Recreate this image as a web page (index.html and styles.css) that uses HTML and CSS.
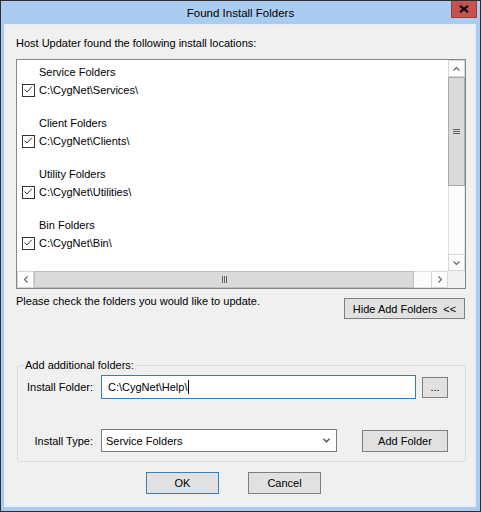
FILE: index.html
```html
<!DOCTYPE html>
<html lang="en">
<head>
<meta charset="utf-8">
<title>Found Install Folders</title>
<link rel="stylesheet" href="styles.css">
</head>
<body>
<div class="window">
  <div class="titlebar">
    <span class="tb-spacer"></span>
    <span class="title">Found Install Folders</span>
    <button class="close" aria-label="Close">
      <svg width="10" height="8" viewBox="0 0 10 8"><path d="M1 0.8 L9 7.2 M9 0.8 L1 7.2" stroke="#111" stroke-width="2.2" fill="none"/></svg>
    </button>
  </div>
  <div class="client">
    <p class="intro">Host Updater found the following install locations:</p>
    <div class="listbox">
      <div class="list-content">
        <div class="group">
          <div class="group-label">Service Folders</div>
          <div class="item"><span class="check"><svg width="11" height="11" viewBox="0 0 11 11"><path d="M1.5 4.5 L4 7 L9 1.5" stroke="#3a3a3a" stroke-width="1" fill="none"/></svg></span><span>C:\CygNet\Services\</span></div>
        </div>
        <div class="group">
          <div class="group-label">Client Folders</div>
          <div class="item"><span class="check"><svg width="11" height="11" viewBox="0 0 11 11"><path d="M1.5 4.5 L4 7 L9 1.5" stroke="#3a3a3a" stroke-width="1" fill="none"/></svg></span><span>C:\CygNet\Clients\</span></div>
        </div>
        <div class="group">
          <div class="group-label">Utility Folders</div>
          <div class="item"><span class="check"><svg width="11" height="11" viewBox="0 0 11 11"><path d="M1.5 4.5 L4 7 L9 1.5" stroke="#3a3a3a" stroke-width="1" fill="none"/></svg></span><span>C:\CygNet\Utilities\</span></div>
        </div>
        <div class="group">
          <div class="group-label">Bin Folders</div>
          <div class="item"><span class="check"><svg width="11" height="11" viewBox="0 0 11 11"><path d="M1.5 4.5 L4 7 L9 1.5" stroke="#3a3a3a" stroke-width="1" fill="none"/></svg></span><span>C:\CygNet\Bin\</span></div>
        </div>
      </div>
      <div class="vscroll">
        <div class="sb-btn"><svg width="7" height="4" viewBox="0 0 7 4"><path d="M0.5 3.5 L3.5 0.5 L6.5 3.5" stroke="#606060" stroke-width="1.1" fill="none"/></svg></div>
        <div class="vthumb"><span class="grip-h"></span></div>
        <div class="vtrack"></div>
        <div class="sb-btn"><svg width="7" height="4" viewBox="0 0 7 4"><path d="M0.5 0.5 L3.5 3.5 L6.5 0.5" stroke="#606060" stroke-width="1.1" fill="none"/></svg></div>
      </div>
      <div class="hscroll">
        <div class="sb-btn"><svg width="4" height="7" viewBox="0 0 4 7"><path d="M3.5 0.5 L0.5 3.5 L3.5 6.5" stroke="#606060" stroke-width="1.1" fill="none"/></svg></div>
        <div class="hthumb"><span class="grip-v"></span></div>
        <div class="htrack"></div>
        <div class="sb-btn"><svg width="4" height="7" viewBox="0 0 4 7"><path d="M0.5 0.5 L3.5 3.5 L0.5 6.5" stroke="#606060" stroke-width="1.1" fill="none"/></svg></div>
      </div>
      <div class="corner"></div>
    </div>
    <div class="note-row">
      <span class="note">Please check the folders you would like to update.</span>
      <button class="btn btn-hide">Hide Add Folders&nbsp;&nbsp;&lt;&lt;</button>
    </div>
    <fieldset class="addbox">
      <legend>Add additional folders:</legend>
      <div class="field-row">
        <span class="field-label">Install Folder:</span>
        <div class="textbox">C:\CygNet\Help\<span class="caret"></span></div>
        <button class="btn btn-browse">...</button>
      </div>
      <div class="field-row row-type">
        <span class="field-label">Install Type:</span>
        <div class="combo"><span>Service Folders</span><svg width="7" height="5" viewBox="0 0 7 5"><path d="M0.5 0.8 L3.5 3.8 L6.5 0.8" stroke="#505050" stroke-width="1.4" fill="none"/></svg></div>
        <button class="btn btn-add">Add Folder</button>
      </div>
    </fieldset>
    <div class="actions">
      <button class="btn btn-ok">OK</button>
      <button class="btn btn-cancel">Cancel</button>
    </div>
  </div>
</div>
</body>
</html>
```

FILE: styles.css
```css
* { box-sizing: border-box; }

html, body {
  margin: 0;
  padding: 0;
}

body {
  font-family: "Liberation Sans", Arial, sans-serif;
  font-size: 11px;
  color: #000;
  background: #fff;
}

.window {
  width: 481px;
  height: 512px;
  border: 1px solid #2f2f2f;
  background: #a9ccf0;
  display: flex;
  flex-direction: column;
}

.titlebar {
  height: 23px;
  flex: none;
  display: grid;
  grid-template-columns: 1fr auto 1fr;
  align-items: start;
}

.title {
  align-self: center;
  font-size: 11.5px;
  color: #000;
  line-height: 14px;
  padding-top: 1px;
}

.close {
  justify-self: end;
  margin: 0 3px 0 0;
  width: 26px;
  height: 17px;
  padding: 0;
  border: 1px solid #9c3c38;
  border-top: none;
  background: #c75050;
  display: flex;
  align-items: center;
  justify-content: center;
}

.client {
  flex: none;
  width: 472px;
  height: 483px;
  margin: 0 4px 4px 3px;
  border: 1px solid #e4eef9;
  background: #f0f0f0;
  padding-left: 11px;
  display: flex;
  flex-direction: column;
  align-items: flex-start;
}

.intro {
  margin: 11px 0 0;
  line-height: 15px;
}

.listbox {
  margin-top: 8px;
  width: 450px;
  height: 230px;
  border: 1px solid #828790;
  background: #fff;
  display: grid;
  grid-template-columns: 1fr 17px;
  grid-template-rows: 1fr 17px;
}

.list-content {
  padding-top: 3px;
  overflow: hidden;
}

.group + .group { margin-top: 15px; }

.group-label {
  line-height: 18px;
  padding-left: 22px;
}

.item {
  height: 18px;
  display: flex;
  align-items: center;
  gap: 4px;
  padding-left: 5px;
}

.check {
  width: 13px;
  height: 13px;
  border: 1px solid #333;
  background: #fff;
  display: flex;
}

.vscroll {
  display: flex;
  flex-direction: column;
  background: #fcfcfc;
}

.hscroll {
  display: flex;
  background: #fcfcfc;
}

.sb-btn {
  flex: none;
  width: 17px;
  height: 17px;
  border: 1px solid #d6d6d6;
  background: #fdfdfd;
  display: flex;
  align-items: center;
  justify-content: center;
}

.vthumb {
  flex: none;
  height: 109px;
  background: #dadada;
  border: 1px solid #ababab;
  display: flex;
  align-items: center;
  justify-content: center;
}

.vtrack {
  flex: 1;
  border-left: 1px solid #e2e2e2;
  border-right: 1px solid #e2e2e2;
}

.hthumb {
  flex: none;
  width: 380px;
  background: #dadada;
  border: 1px solid #bdbdbd;
  display: flex;
  align-items: center;
  justify-content: center;
}

.htrack {
  flex: 1;
  border-top: 1px solid #e2e2e2;
  border-bottom: 1px solid #e2e2e2;
}

.grip-h {
  width: 7px;
  height: 5px;
  border-top: 1px solid #606060;
  border-bottom: 1px solid #606060;
  background: linear-gradient(#606060, #606060) center / 7px 1px no-repeat;
}

.grip-v {
  width: 5px;
  height: 7px;
  border-left: 1px solid #606060;
  border-right: 1px solid #606060;
  background: linear-gradient(#606060, #606060) center / 1px 7px no-repeat;
}

.corner {
  background: #f0f0f0;
}

.note-row {
  margin-top: 5px;
  width: 449px;
  display: flex;
  justify-content: space-between;
  align-items: flex-start;
}

.note { line-height: 15px; }

.btn {
  font-family: inherit;
  font-size: 11px;
  color: #000;
  padding: 0;
  background: #e1e1e1;
  border: 1px solid #7f7f7f;
  border-radius: 0;
  display: flex;
  align-items: center;
  justify-content: center;
  line-height: 14px;
}

.btn-hide {
  margin-top: 4px;
  width: 121px;
  height: 21px;
}

.addbox {
  margin: 39px 0 0 1px;
  width: 449px;
  min-width: 0;
  border: 1px solid #dcdcdc;
  border-radius: 3px;
  padding: 3px 17px 9px 6px;
}

.addbox legend {
  padding: 0 1px;
  line-height: 14px;
}

.field-row {
  height: 24px;
  display: flex;
  align-items: center;
}

.field-label {
  width: 69px;
  margin-right: 8px;
  text-align: right;
}

.textbox {
  width: 315px;
  height: 24px;
  border: 1px solid #3a7bbf;
  background: #fff;
  padding-left: 6px;
  display: flex;
  align-items: center;
}

.caret {
  display: inline-block;
  width: 1px;
  height: 14px;
  margin-left: 1px;
  background: #000;
}

.btn-browse {
  margin-left: auto;
  width: 26px;
  height: 21px;
  align-items: flex-end;
  padding-bottom: 3px;
}

.row-type {
  margin-top: 30px;
  height: 23px;
}

.combo {
  width: 236px;
  height: 23px;
  border: 1px solid #7a7a7a;
  background: #fff;
  padding: 0 6px 0 4px;
  display: flex;
  align-items: center;
  justify-content: space-between;
}

.btn-add {
  margin-left: auto;
  width: 86px;
  height: 22px;
}

.actions {
  margin-top: 10px;
  padding-left: 130px;
  display: flex;
  gap: 29px;
}

.btn-ok, .btn-cancel {
  width: 73px;
  height: 22px;
}

.btn-ok { border-color: #3c7fb1; }
```
